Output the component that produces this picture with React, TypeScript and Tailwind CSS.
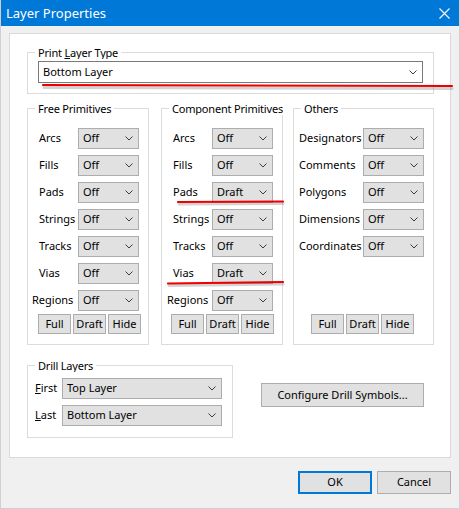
import React from "react";

const Chevron = () => (
  <svg width="8" height="5" viewBox="0 0 8 5" className="shrink-0">
    <path d="M0.5 0.5 L4 4 L7.5 0.5" stroke="#3c3c3c" strokeWidth="1" fill="none" />
  </svg>
);

function Combo({ value, w, white }: { value: string; w: string; white?: boolean }) {
  return (
    <div
      className={`${w} h-[21px] shrink-0 flex items-center justify-between pl-[4px] pr-[5px] border ${
        white ? "bg-white border-[#7a7a7a]" : "bg-[#e1e1e1] border-[#adadad]"
      }`}
    >
      <span className="whitespace-nowrap">{value}</span>
      <Chevron />
    </div>
  );
}

function Group({
  label,
  className,
  children,
}: {
  label: React.ReactNode;
  className: string;
  children?: React.ReactNode;
}) {
  return (
    <div className={`relative border border-[#dcdcdc] shrink-0 ${className}`}>
      <div className="absolute left-[7px] -right-px -top-[7px] overflow-hidden leading-[13px] h-[13px]">
        <span className="inline-block bg-white px-[3px] whitespace-nowrap tracking-[-0.2px]">{label}</span>
      </div>
      {children}
    </div>
  );
}

function Btn({ children, className }: { children: React.ReactNode; className: string }) {
  return (
    <div
      className={`flex items-center justify-center bg-[#e1e1e1] border border-[#adadad] whitespace-nowrap shrink-0 ${className}`}
    >
      {children}
    </div>
  );
}

type Row = { label: string; value: string; shift?: string };

function PrimGroup({
  title,
  rows,
  className,
  pl,
  labelW,
  btnPl,
}: {
  title: string;
  rows: Row[];
  className: string;
  pl: string;
  labelW: string;
  btnPl: string;
}) {
  return (
    <Group label={title} className={className}>
      <div className={`flex flex-col pt-[19px] ${pl}`}>
        <div className="flex flex-col gap-[6px] h-[183px]">
          {rows.map((r) => (
            <div key={r.label} className="flex items-center h-[21px]">
              <span className={`${r.shift ?? labelW} whitespace-nowrap shrink-0`}>{r.label}</span>
              <Combo value={r.value} w="w-[61px]" />
            </div>
          ))}
        </div>
      </div>
      <div className={`flex gap-[2px] mt-[3px] ${btnPl}`}>
        <Btn className="w-[33px] h-[20px]">Full</Btn>
        <Btn className="w-[33px] h-[20px]">Draft</Btn>
        <Btn className="w-[33px] h-[20px]">Hide</Btn>
      </div>
    </Group>
  );
}

export default function App() {
  const free: Row[] = [
    { label: "Arcs", value: "Off" },
    { label: "Fills", value: "Off" },
    { label: "Pads", value: "Off" },
    { label: "Strings", value: "Off" },
    { label: "Tracks", value: "Off" },
    { label: "Vias", value: "Off" },
    { label: "Regions", value: "Off", shift: "-ml-[7px] w-[46px]" },
  ];
  const comp: Row[] = [
    { label: "Arcs", value: "Off" },
    { label: "Fills", value: "Off" },
    { label: "Pads", value: "Draft" },
    { label: "Strings", value: "Off" },
    { label: "Tracks", value: "Off" },
    { label: "Vias", value: "Draft" },
    { label: "Regions", value: "Off", shift: "-ml-[6px] w-[45px]" },
  ];
  const others: Row[] = [
    { label: "Designators", value: "Off" },
    { label: "Comments", value: "Off" },
    { label: "Polygons", value: "Off" },
    { label: "Dimensions", value: "Off" },
    { label: "Coordinates", value: "Off" },
  ];

  return (
    <div className="relative w-[460px] h-[509px] bg-[#f0f0f0] border-x border-b border-[#d0d0d0] text-[11px] text-black font-['Noto_Sans',sans-serif] overflow-hidden">
      {/* Title bar */}
      <div className="h-[26px] bg-[#0078d7] flex items-center justify-between pl-[5px] pr-[9px]">
        <span className="text-white text-[13px] leading-none">Layer Properties</span>
        <svg width="11" height="11" viewBox="0 0 11 11">
          <path d="M0.5 0.5 L10.5 10.5 M10.5 0.5 L0.5 10.5" stroke="#ffffff" strokeWidth="1.1" fill="none" />
        </svg>
      </div>

      {/* White panel */}
      <div className="ml-[8px] mt-[7px] w-[442px] h-[425px] bg-white border border-[#d9d9d9] pl-[17px] pt-[18px]">
        <Group
          label={
            <>
              Print <u>L</u>ayer Type
            </>
          }
          className="w-[407px] h-[42px]"
        >
          <div className="ml-[10px] mt-[8px]">
            <Combo value="Bottom Layer" w="w-[385px] h-[22px]" white />
          </div>
        </Group>

        <div className="flex mt-[14px]">
          <PrimGroup
            title="Free Primitives"
            rows={free}
            className="w-[122px] h-[237px]"
            pl="pl-[11px]"
            labelW="w-[39px]"
            btnPl="pl-[10px]"
          />
          <PrimGroup
            title="Component Primitives"
            rows={comp}
            className="w-[122px] h-[237px] ml-[12px]"
            pl="pl-[11px]"
            labelW="w-[39px]"
            btnPl="pl-[9px]"
          />
          <PrimGroup
            title="Others"
            rows={others}
            className="w-[141px] h-[237px] ml-[10px]"
            pl="pl-[5px]"
            labelW="w-[64px]"
            btnPl="pl-[17px]"
          />
        </div>

        <div className="flex items-start mt-[20px]">
          <Group label="Drill Layers" className="w-[206px] h-[73px]">
            <div className="flex flex-col gap-[6px] pt-[12px] pl-[7px]">
              <div className="flex items-center h-[21px]">
                <span className="w-[27px] shrink-0">
                  <u>F</u>irst
                </span>
                <Combo value="Top Layer" w="w-[160px]" />
              </div>
              <div className="flex items-center h-[21px]">
                <span className="w-[27px] shrink-0">
                  <u>L</u>ast
                </span>
                <Combo value="Bottom Layer" w="w-[160px]" />
              </div>
            </div>
          </Group>
          <Btn className="ml-[28px] mt-[18px] w-[163px] h-[24px]">Configure Drill Symbols...</Btn>
        </div>
      </div>

      {/* Dialog buttons */}
      <div className="flex justify-end gap-[5px] mt-[13px] pr-[8px]">
        <div className="w-[74px] h-[23px] flex items-center justify-center bg-[#e1e1e1] border-2 border-[#0078d7]">
          OK
        </div>
        <Btn className="w-[74px] h-[23px]">Cancel</Btn>
      </div>

      {/* Red annotation marks */}
      <svg className="absolute inset-0 pointer-events-none" width="460" height="509" viewBox="0 0 460 509">
        <g stroke="#808080" strokeOpacity="0.35" strokeWidth="3" strokeLinecap="round" fill="none">
          <path d="M43 87.5 L451 88.5" />
          <path d="M178 204 L282 203.5" />
          <path d="M168 285.5 L282 284" />
        </g>
        <g stroke="#ee0000" strokeWidth="2.2" strokeLinecap="round" fill="none">
          <path d="M42 85 L451 86" />
          <path d="M177 202 L282 201.5" />
          <path d="M167 283.5 L282 282" />
        </g>
      </svg>
    </div>
  );
}
